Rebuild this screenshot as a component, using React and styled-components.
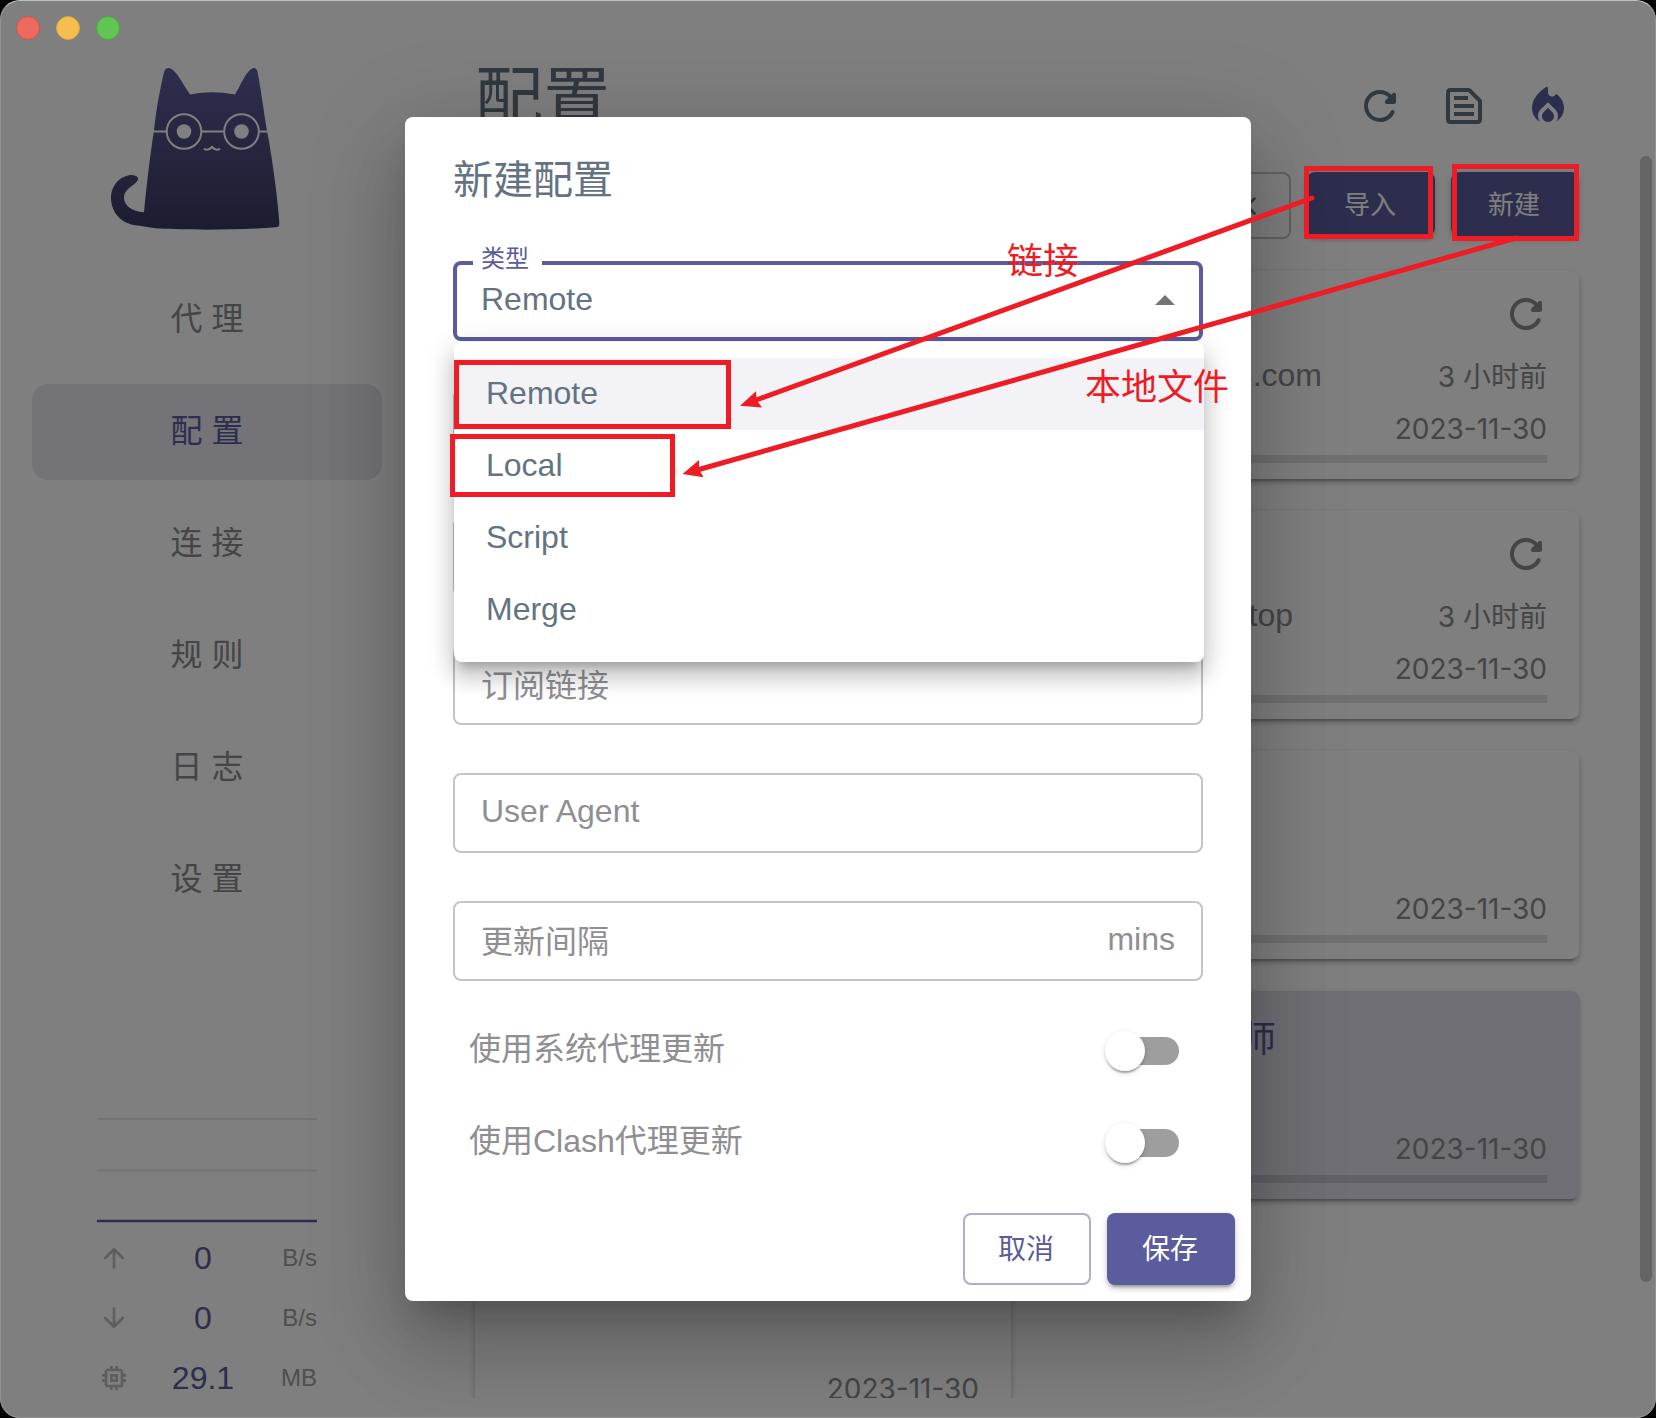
import React, { useState } from "react";
import styled, { createGlobalStyle } from "styled-components";

const primary = "#5b5c9d";
const textPrimary = "#637381";
const textSecondary = "#8a8a8e";
const mark = "#ee1c24";
const raised =
  "0 6px 2px -4px rgba(0,0,0,.2), 0 4px 4px 0 rgba(0,0,0,.14), 0 2px 10px 0 rgba(0,0,0,.12)";

const GlobalStyle = createGlobalStyle`
  *, *::before, *::after { box-sizing: border-box; }
  html, body { margin: 0; background: #000; }
  body, button, input, select {
    font-family: "Liberation Sans", "Noto Sans CJK SC", sans-serif;
  }
  h1, h2, p, ul { margin: 0; padding: 0; font-weight: 400; }
  ul { list-style: none; }
`;

const Window = styled.div`
  position: relative;
  display: flex;
  width: 100%;
  height: 100vh;
  overflow: hidden;
  border-radius: 20px;
  background: #fff;
`;

const Frame = styled.div`
  position: absolute;
  inset: 0;
  border: 1px solid rgba(255, 255, 255, 0.14);
  border-top-color: rgba(255, 255, 255, 0.5);
  border-radius: 20px;
  pointer-events: none;
`;

const TrafficLights = styled.div`
  position: absolute;
  top: 16px;
  left: 16px;
  display: flex;
  gap: 16px;
`;

const Light = styled.button`
  width: 24px;
  height: 24px;
  padding: 0;
  border: 1px solid ${(p) => p.$edge};
  border-radius: 50%;
  background: ${(p) => p.$fill};
`;

/* Sidebar */

const Sidebar = styled.aside`
  display: flex;
  flex: 0 0 414px;
  flex-direction: column;
  padding: 64px 32px 10px;
`;

const Logo = styled.svg`
  flex: none;
  align-self: center;
  width: 224px;
  height: 170px;
  margin-bottom: 38px;
`;

const Nav = styled.nav`
  display: flex;
  flex-direction: column;
  gap: 16px;
`;

const NavLink = styled.a`
  display: flex;
  align-items: center;
  justify-content: center;
  height: 96px;
  border-radius: 16px;
  font-size: 32px;
  text-decoration: none;
  padding-bottom: 8px;
  color: ${(p) => (p.$active ? primary : textSecondary)};
  background: ${(p) => (p.$active ? "rgba(91,92,157,.15)" : "transparent")};
`;

const Traffic = styled.section`
  display: flex;
  flex-direction: column;
  align-self: center;
  width: 220px;
  margin-top: auto;
`;

const Chart = styled.svg`
  width: 220px;
  height: 110px;
`;

const Stat = styled.div`
  display: grid;
  grid-template-columns: 34px 1fr 42px;
  align-items: center;
  height: 60px;

  & > svg {
    justify-self: center;
  }
`;

const StatValue = styled.span`
  font-size: 32px;
  text-align: center;
  color: ${primary};
`;

const StatUnit = styled.span`
  font-size: 24px;
  text-align: right;
  color: #9e9e9e;
`;

/* Main */

const Main = styled.main`
  display: flex;
  flex: 1;
  flex-direction: column;
  min-width: 0;
  padding-bottom: 20px;
`;

const Header = styled.header`
  display: flex;
  align-items: center;
  height: 156px;
  padding: 56px 84px 0 61px;
`;

const PageTitle = styled.h1`
  flex: 1;
  font-size: 68px;
  line-height: 100px;
  padding-bottom: 14px;
  color: ${textPrimary};
`;

const HeaderActions = styled.div`
  display: flex;
  gap: 36px;
`;

const IconButton = styled.button`
  display: flex;
  padding: 0;
  border: 0;
  background: none;
  color: ${(p) => p.$color || textPrimary};
`;

const Scroller = styled.div`
  display: flex;
  flex: 1;
  min-height: 0;
  overflow: hidden;
  padding-right: 4px;
`;

const Content = styled.div`
  flex: 1;
  min-width: 0;
  padding: 16px 61px 0;
`;

const Scrollbar = styled.div`
  flex: none;
  width: 12px;
  height: calc(100% - 116px);
  border-radius: 6px;
  background: #c8c8ce;
`;

const Toolbar = styled.form`
  display: flex;
  align-items: flex-start;
  gap: 16px;
  margin-bottom: 32px;
`;

const UrlField = styled.div`
  display: flex;
  flex: 1;
  align-items: center;
  height: 67px;
  padding: 0 26px 0 28px;
  border: 2px solid #c4c4c4;
  border-radius: 8px;
`;

const BareInput = styled.input`
  flex: 1;
  min-width: 0;
  padding: 0;
  border: 0;
  outline: 0;
  background: transparent;
  color: ${textPrimary};
  font-size: 32px;
`;

const Button = styled.button`
  width: 128px;
  height: ${(p) => (p.$large ? 72 : 64)}px;
  padding: 0 2px 4px 0;
  border: ${(p) => (p.$outlined ? "2px solid rgba(91,92,157,.5)" : "0")};
  border-radius: 8px;
  font-size: ${(p) => (p.$large ? 28 : 26)}px;
  color: ${(p) => (p.$outlined ? primary : "#fff")};
  background: ${(p) => (p.$outlined ? "#fff" : primary)};
  box-shadow: ${(p) => (p.$outlined ? "none" : raised)};
`;

const Grid = styled.div`
  display: grid;
  grid-template-columns: 1fr 1fr;
  gap: 32px;
`;

const Card = styled.article`
  display: flex;
  flex-direction: column;
  height: 208px;
  padding: 16px 32px;
  border-radius: 8px;
  color: ${textSecondary};
  background: ${(p) => (p.$active ? "#dedeeb" : "#fff")};
  box-shadow: ${raised};
`;

const CardTop = styled.div`
  display: flex;
  align-items: flex-start;
  justify-content: flex-end;
  height: 60px;
  padding-top: 3px;

  & > button {
    margin-right: -3px;
  }
`;

const CardName = styled.h2`
  width: 201px;
  margin-right: auto;
  font-size: 36px;
  text-align: right;
  color: ${primary};
`;

const CardLine = styled.div`
  display: flex;
  align-items: center;
  justify-content: space-between;
  height: ${(p) => (p.$small ? 52 : 56)}px;
  font-family: Inter, "Noto Sans CJK SC", sans-serif;
  font-size: 28px;
`;

const Source = styled.span`
  width: ${(p) => p.$width}px;
  font-family: "Liberation Sans", sans-serif;
  font-size: 32px;
  text-align: right;
`;

const Stamp = styled.span`
  margin-left: auto;
`;

const Usage = styled.div`
  height: 8px;
  background: rgba(0, 0, 0, 0.12);
`;

/* Dialog */

const Backdrop = styled.div`
  position: absolute;
  inset: 0;
  display: flex;
  align-items: center;
  justify-content: center;
  background: rgba(0, 0, 0, 0.5);
`;

const Dialog = styled.form`
  display: flex;
  flex-direction: column;
  width: 846px;
  max-width: calc(100% - 64px);
  border-radius: 8px;
  background: #fff;
  box-shadow: 0 22px 30px -14px rgba(0, 0, 0, 0.2),
    0 48px 76px 6px rgba(0, 0, 0, 0.14), 0 18px 92px 16px rgba(0, 0, 0, 0.12);
`;

const DialogTitle = styled.h2`
  padding: 31px 48px 0;
  font-size: 40px;
  line-height: 64px;
  color: ${textPrimary};
`;

const Fields = styled.div`
  display: flex;
  flex-direction: column;
  gap: 48px;
  padding: 49px 48px 32px;
`;

const Field = styled.label`
  display: flex;
  align-items: center;
  gap: 16px;
  height: 80px;
  padding: 0 26px 4px;
  border: 2px solid #c4c4c4;
  border-radius: 8px;
  font-size: 32px;
  color: #8e8e93;
`;

const SelectField = styled.div`
  position: relative;
  display: flex;
  height: 80px;
  border: 4px solid ${primary};
  border-radius: 8px;
`;

const SelectLabel = styled.label`
  position: absolute;
  top: -24px;
  left: 16px;
  padding: 0 13px 0 8px;
  font-size: 24px;
  line-height: 36px;
  color: ${primary};
  background: #fff;
`;

const Select = styled.select`
  flex: 1;
  appearance: none;
  padding: 0 24px 4px;
  border: 0;
  outline: 0;
  font-size: 32px;
  color: ${textPrimary};
  background: transparent;
`;

const SelectArrow = styled.svg`
  position: absolute;
  top: 12px;
  right: 10px;
  pointer-events: none;
`;

const Menu = styled.ul`
  position: absolute;
  top: 77px;
  left: -3px;
  z-index: 1;
  width: calc(100% + 8px);
  padding: 16px 0;
  border-radius: 8px;
  background: #fff;
  box-shadow: 0 10px 10px -6px rgba(0, 0, 0, 0.2),
    0 16px 20px 2px rgba(0, 0, 0, 0.14), 0 6px 28px 4px rgba(0, 0, 0, 0.12);
`;

const MenuItem = styled.li`
  height: 72px;
  padding: 0 32px;
  font-size: 32px;
  line-height: 70px;
  color: ${textPrimary};
  background: ${(p) => (p.$selected ? "rgba(91,92,157,.08)" : "transparent")};
`;

const Toggles = styled.div`
  display: flex;
  flex-direction: column;
  gap: 16px;
  padding: 0 48px 32px;
`;

const Toggle = styled.label`
  display: flex;
  align-items: center;
  justify-content: space-between;
  height: 76px;
  padding: 0 24px 0 16px;
  font-size: 32px;
  line-height: 48px;
  color: #8e8e93;
`;

const ToggleText = styled.span`
  padding-bottom: 4px;
`;

const Switch = styled.input`
  position: relative;
  appearance: none;
  width: 68px;
  height: 28px;
  margin: 0;
  border-radius: 14px;
  background: ${(p) => (p.checked ? "#adaece" : "#9e9e9e")};

  &::before {
    content: "";
    position: absolute;
    top: -6px;
    left: ${(p) => (p.checked ? 34 : -6)}px;
    width: 40px;
    height: 40px;
    border-radius: 50%;
    background: ${(p) => (p.checked ? primary : "#fff")};
    box-shadow: 0 4px 2px -2px rgba(0, 0, 0, 0.2),
      0 2px 2px 0 rgba(0, 0, 0, 0.14), 0 2px 6px 0 rgba(0, 0, 0, 0.12);
  }
`;

const Actions = styled.footer`
  display: flex;
  justify-content: flex-end;
  gap: 16px;
  padding: 0 16px 16px;
`;

/* Hand-drawn notes over the window */

const Notes = styled.div`
  position: absolute;
  inset: 0;
  z-index: 2;
  pointer-events: none;
`;

const NoteBox = styled.div`
  position: absolute;
  top: ${(p) => p.$y}px;
  left: ${(p) => p.$x}px;
  width: ${(p) => p.$w}px;
  height: ${(p) => p.$h}px;
  border: 5px solid ${mark};
`;

const NoteText = styled.p`
  position: absolute;
  top: ${(p) => p.$y}px;
  left: ${(p) => p.$x}px;
  font-size: 36px;
  line-height: 40px;
  white-space: nowrap;
  color: ${mark};
`;

const NoteArrows = styled.svg`
  position: absolute;
  top: 0;
  left: 0;
`;

const icons = {
  refresh:
    "M17.65 6.35c-1.63-1.63-3.94-2.57-6.48-2.31-3.67.37-6.69 3.35-7.1 7.02C3.52 15.91 7.27 20 12 20c3.19 0 5.93-1.87 7.21-4.56.32-.67-.16-1.44-.9-1.44-.37 0-.72.2-.88.53-1.13 2.43-3.84 3.97-6.8 3.31-2.22-.49-4.01-2.3-4.48-4.52C5.31 9.44 8.26 6 12 6c1.66 0 3.14.69 4.22 1.78l-1.51 1.51c-.63.63-.19 1.71.7 1.71H19c.55 0 1-.45 1-1V6.41c0-.89-1.08-1.34-1.71-.71l-.64.65z",
  snippet:
    "M14.17 5 19 9.83V19H5V5h9.17m0-2H5c-1.1 0-2 .9-2 2v14c0 1.1.9 2 2 2h14c1.1 0 2-.9 2-2V9.83c0-.53-.21-1.04-.59-1.41l-4.83-4.83c-.37-.38-.88-.59-1.41-.59zM7 15h10v2H7v-2zm0-4h10v2H7v-2zm0-4h7v2H7V7z",
  fire: "M12 12.9l-2.13 2.09c-.56.56-.87 1.29-.87 2.07C9 18.68 10.35 20 12 20s3-1.32 3-2.94c0-.78-.31-1.52-.87-2.07L12 12.9zM16 6l-.44.55C14.38 8.02 12 7.19 12 5.3V3.2c0-.9-.6-1-1.1-.6C8.6 4.1 4 7.8 4 13c0 2.92 1.56 5.47 3.89 6.86-.56-.79-.89-1.76-.89-2.8 0-1.32.52-2.56 1.47-3.5L12 10.1l3.53 3.47c.95.93 1.47 2.17 1.47 3.5 0 1.02-.31 1.96-.85 2.75 1.89-1.15 3.29-3.06 3.71-5.3.66-3.55-1.07-6.9-3.86-8.52z",
  up: "M13 19V7.83l4.88 4.88c.39.39 1.03.39 1.42 0 .39-.39.39-1.02 0-1.41l-6.59-6.59a.996.996 0 0 0-1.41 0l-6.6 6.58a.996.996 0 1 0 1.41 1.41L11 7.83V19c0 .55.45 1 1 1s1-.45 1-1z",
  down: "M11 5v11.17l-4.88-4.88c-.39-.39-1.03-.39-1.42 0-.39.39-.39 1.02 0 1.41l6.59 6.59c.39.39 1.02.39 1.41 0l6.59-6.59a.996.996 0 1 0-1.41-1.41L13 16.17V5c0-.55-.45-1-1-1s-1 .45-1 1z",
  memory:
    "M15 9H9v6h6V9zm-2 4h-2v-2h2v2zm8-2V9h-2V7c0-1.1-.9-2-2-2h-2V3h-2v2h-2V3H9v2H7c-1.1 0-2 .9-2 2v2H3v2h2v2H3v2h2v2c0 1.1.9 2 2 2h2v2h2v-2h2v2h2v-2h2c1.1 0 2-.9 2-2v-2h2v-2h-2v-2h2zm-4 6H7V7h10v10z",
  clear:
    "M18.3 5.71a.996.996 0 0 0-1.41 0L12 10.59 7.11 5.7A.996.996 0 1 0 5.7 7.11L10.59 12 5.7 16.89a.996.996 0 1 0 1.41 1.41L12 13.41l4.89 4.89a.996.996 0 1 0 1.41-1.41L13.41 12l4.89-4.89c.38-.38.38-1.02 0-1.4z",
};

const Icon = ({ name, size = 48, color = "currentColor" }) => (
  <svg width={size} height={size} viewBox="0 0 24 24" fill={color} aria-hidden="true">
    <path d={icons[name]} />
  </svg>
);

const CatLogo = () => (
  <Logo viewBox="95 64 224 170" role="img">
    <defs>
      <linearGradient id="fur" x1="0" y1="0" x2="0" y2="1">
        <stop offset="0" stopColor="#5d5d9c" />
        <stop offset="1" stopColor="#3a3a62" />
      </linearGradient>
    </defs>
    <path
      fill="url(#fur)"
      d="M144 212.3C147 180 151 150 154 130C157 104 160 90 164 72Q165.5 67.500 169 68C176 69.500 181 81 190 94.500Q212 90 235 94.500C240 87 246 70 253.500 68Q256.500 67.500 257.500 72C262 95 264.500 118 267.500 133C273.500 166 278 202 279.300 222Q279.500 226.500 277.500 227C250 230 190 230.300 160 228.600C148 227.500 142 226 134 225C119 222.500 111 210 111 198C111 184 122 175 132 175Q138.500 175.500 138 179.500C136 185.500 124 188 124 198C124.500 206 132 211.500 144 212.300Z"
    />
    <g fill="none" stroke="#fff" strokeWidth="2">
      <circle cx="184" cy="131.500" r="17.300" />
      <circle cx="241.500" cy="131.500" r="17.300" />
      <path d="M153 131.500H166.500M201.500 131.500H224M259 131.500H269" />
      <path strokeLinecap="round" d="M204.500 149.200Q208.500 151 212 147Q215.500 151 219.500 149.200" />
    </g>
    <circle cx="184" cy="131.500" r="7.300" fill="#fff" />
    <circle cx="241.500" cy="131.500" r="7.300" fill="#fff" />
  </Logo>
);

const navItems = ["代 理", "配 置", "连 接", "规 则", "日 志", "设 置"];

const stats = [
  { icon: "up", value: "0", unit: "B/s" },
  { icon: "down", value: "0", unit: "B/s" },
  { icon: "memory", value: "29.1", unit: "MB" },
];

const profiles = [
  {},
  { source: ".com", width: 247, updated: "3 小时前", date: "2023-11-30" },
  {},
  { source: "top", width: 218, updated: "3 小时前", date: "2023-11-30" },
  {},
  { date: "2023-11-30" },
  {},
  { name: "师", date: "2023-11-30", active: true },
  { date: "2023-11-30" },
];

const types = ["Remote", "Local", "Script", "Merge"];

const ProfileCard = ({ source, width, updated, name, date, active }) => (
  <Card $active={active}>
    <CardTop>
      {name && <CardName>{name}</CardName>}
      {updated && (
        <IconButton type="button" $color={textSecondary} aria-label="更新">
          <Icon name="refresh" />
        </IconButton>
      )}
    </CardTop>
    <CardLine>
      {source && <Source $width={width}>{source}</Source>}
      {updated && <Stamp>{updated}</Stamp>}
    </CardLine>
    <CardLine $small>
      <Stamp>{date}</Stamp>
    </CardLine>
    <Usage />
  </Card>
);

export default function App() {
  const [type, setType] = useState("Remote");
  const [systemProxy, setSystemProxy] = useState(false);
  const [clashProxy, setClashProxy] = useState(false);

  return (
    <>
      <GlobalStyle />
      <Window>
        <Sidebar>
          <CatLogo />
          <Nav>
            {navItems.map((item) => (
              <NavLink key={item} href="#" $active={item === "配 置"}>
                {item}
              </NavLink>
            ))}
          </Nav>
          <Traffic>
            <Chart viewBox="0 0 220 110">
              <path d="M0 1H220M0 52.500H220" stroke="#e6e6e6" strokeWidth="2" />
              <path d="M0 103H220" stroke={primary} strokeWidth="2.500" />
            </Chart>
            {stats.map((s) => (
              <Stat key={s.icon}>
                <Icon name={s.icon} size={32} color="#bdbdbd" />
                <StatValue>{s.value}</StatValue>
                <StatUnit>{s.unit}</StatUnit>
              </Stat>
            ))}
          </Traffic>
        </Sidebar>

        <Main>
          <Header>
            <PageTitle>配置</PageTitle>
            <HeaderActions>
              <IconButton type="button" aria-label="更新">
                <Icon name="refresh" />
              </IconButton>
              <IconButton type="button" aria-label="日志">
                <Icon name="snippet" />
              </IconButton>
              <IconButton type="button" $color={primary} aria-label="重载">
                <Icon name="fire" />
              </IconButton>
            </HeaderActions>
          </Header>
          <Scroller>
            <Content>
              <Toolbar>
                <UrlField>
                  <BareInput aria-label="链接" />
                  <IconButton type="button" aria-label="清除">
                    <Icon name="clear" size={32} />
                  </IconButton>
                </UrlField>
                <Button type="button">导入</Button>
                <Button type="button">新建</Button>
              </Toolbar>
              <Grid>
                {profiles.map((p, i) => (
                  <ProfileCard key={i} {...p} />
                ))}
              </Grid>
            </Content>
            <Scrollbar />
          </Scroller>
        </Main>

        <Backdrop>
          <Dialog role="dialog" aria-labelledby="dialog-title">
            <DialogTitle id="dialog-title">新建配置</DialogTitle>
            <Fields>
              <SelectField>
                <SelectLabel htmlFor="type">类型</SelectLabel>
                <Select id="type" value={type} onChange={(e) => setType(e.target.value)}>
                  {types.map((t) => (
                    <option key={t}>{t}</option>
                  ))}
                </Select>
                <SelectArrow width="48" height="48" viewBox="0 0 24 24" fill="#757575">
                  <path d="M7 14l5-5 5 5z" />
                </SelectArrow>
                <Menu role="listbox">
                  {types.map((t) => (
                    <MenuItem
                      key={t}
                      role="option"
                      aria-selected={t === type}
                      $selected={t === type}
                      onClick={() => setType(t)}
                    >
                      {t}
                    </MenuItem>
                  ))}
                </Menu>
              </SelectField>
              <Field>
                <BareInput aria-label="名称" />
              </Field>
              <Field>
                <BareInput aria-label="描述" />
              </Field>
              <Field>
                订阅链接
                <BareInput />
              </Field>
              <Field>
                User Agent
                <BareInput />
              </Field>
              <Field>
                更新间隔
                <BareInput />
                <span>mins</span>
              </Field>
            </Fields>
            <Toggles>
              <Toggle>
                <ToggleText>使用系统代理更新</ToggleText>
                <Switch
                  type="checkbox"
                  checked={systemProxy}
                  onChange={(e) => setSystemProxy(e.target.checked)}
                />
              </Toggle>
              <Toggle>
                <ToggleText>使用Clash代理更新</ToggleText>
                <Switch
                  type="checkbox"
                  checked={clashProxy}
                  onChange={(e) => setClashProxy(e.target.checked)}
                />
              </Toggle>
            </Toggles>
            <Actions>
              <Button type="button" $large $outlined>
                取消
              </Button>
              <Button type="button" $large>
                保存
              </Button>
            </Actions>
          </Dialog>
        </Backdrop>

        <TrafficLights>
          <Light type="button" aria-label="关闭" $fill="#ed6a5e" $edge="#d0524a" />
          <Light type="button" aria-label="最小化" $fill="#f5bf4f" $edge="#d9a03c" />
          <Light type="button" aria-label="全屏" $fill="#61c554" $edge="#4ba83c" />
        </TrafficLights>
        <Frame />

        <Notes>
          <NoteBox $x={1304} $y={166} $w={129} $h={73} />
          <NoteBox $x={1452} $y={164} $w={127} $h={77} />
          <NoteBox $x={454} $y={360} $w={277} $h={69} />
          <NoteBox $x={450} $y={434} $w={225} $h={63} />
          <NoteArrows width="1656" height="520" viewBox="0 0 1656 520">
            <g stroke={mark} strokeWidth="5" strokeLinecap="round">
              <path d="M1312 198L756 400" />
              <path d="M1516 238L699 469.500" />
            </g>
            <g fill={mark}>
              <path d="M740 405.700L756 391.300L756.500 400L762 407.500Z" />
              <path d="M682.500 474L699 460L699 469.500L703.500 477.300Z" />
            </g>
          </NoteArrows>
          <NoteText $x={1007} $y={242}>链接</NoteText>
          <NoteText $x={1085} $y={368}>本地文件</NoteText>
        </Notes>
      </Window>
    </>
  );
}
